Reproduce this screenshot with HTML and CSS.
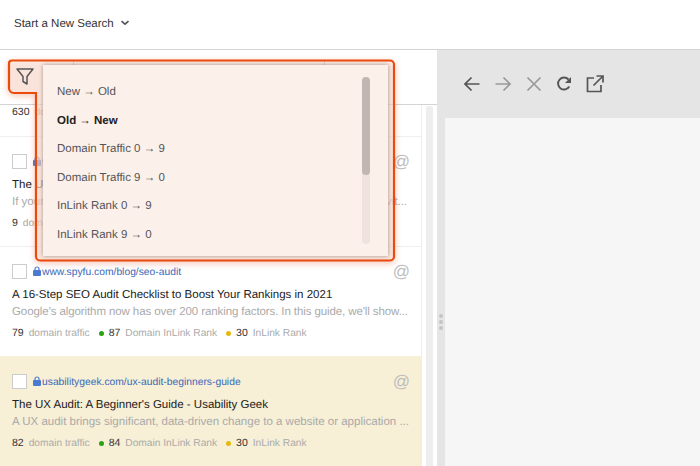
FILE: index.html
```html
<!DOCTYPE html>
<html lang="en">
<head>
<meta charset="utf-8">
<title>Search</title>
<link rel="stylesheet" href="styles.css">
</head>
<body>
<header class="topbar">
  <span class="topbar-title">Start a New Search</span>
  <svg class="chevron" width="10" height="6" viewBox="0 0 10 6"><path d="M1.500 1.200 5 4.200l3.500-3" fill="none" stroke="#555" stroke-width="1.700"/></svg>
</header>
<main class="panes">
  <section class="left">
    <div class="toolbar">
      <button class="filter-btn" type="button">
        <svg width="20" height="20" viewBox="0 0 20 20"><path d="M2 3h16l-6 7.500V18l-4-2.500v-5z" fill="none" stroke="#555" stroke-width="1.500" stroke-linejoin="round"/></svg>
      </button>
      <div class="select-box"></div>
    </div>
    <div class="list-wrap">
      <div class="list">
        <article class="item item-short">
          <div class="meta"><b>630</b><span>domain traffic</span></div>
        </article>
        <article class="item">
          <div class="row-url"><span class="check"></span><svg class="lock" width="8" height="10" viewBox="0 0 8 10"><path d="M2 4.500V3a2 2 0 0 1 4 0v1.500" fill="none" stroke="#4a7bd0" stroke-width="1.200"/><rect y="4" width="8" height="6" rx="1" fill="#4a7bd0"/></svg><a class="url">www.example.com/seo-audit</a><span class="at">@</span></div>
          <h3 class="title">The Ultimate SEO Audit Guide</h3>
          <p class="desc">If your website is not ranking, an audit will show you what to improve and vit...</p>
          <div class="meta"><b>9</b><span>domain traffic</span></div>
        </article>
        <article class="item">
          <div class="row-url"><span class="check"></span><svg class="lock" width="8" height="10" viewBox="0 0 8 10"><path d="M2 4.500V3a2 2 0 0 1 4 0v1.500" fill="none" stroke="#4a7bd0" stroke-width="1.200"/><rect y="4" width="8" height="6" rx="1" fill="#4a7bd0"/></svg><a class="url">www.spyfu.com/blog/seo-audit</a><span class="at">@</span></div>
          <h3 class="title">A 16-Step SEO Audit Checklist to Boost Your Rankings in 2021</h3>
          <p class="desc desc-tight">Google’s algorithm now has over 200 ranking factors. In this guide, we'll show...</p>
          <div class="meta"><b>79</b><span>domain traffic</span><i class="dot dot-green"></i><b>87</b><span>Domain InLink Rank</span><i class="dot dot-yellow"></i><b>30</b><span>InLink Rank</span></div>
        </article>
        <article class="item item-active">
          <div class="row-url"><span class="check"></span><svg class="lock" width="8" height="10" viewBox="0 0 8 10"><path d="M2 4.500V3a2 2 0 0 1 4 0v1.500" fill="none" stroke="#4a7bd0" stroke-width="1.200"/><rect y="4" width="8" height="6" rx="1" fill="#4a7bd0"/></svg><a class="url">usabilitygeek.com/ux-audit-beginners-guide</a><span class="at">@</span></div>
          <h3 class="title">The UX Audit: A Beginner's Guide - Usability Geek</h3>
          <p class="desc">A UX audit brings significant, data-driven change to a website or application ...</p>
          <div class="meta"><b>82</b><span>domain traffic</span><i class="dot dot-green"></i><b>84</b><span>Domain InLink Rank</span><i class="dot dot-yellow"></i><b>30</b><span>InLink Rank</span></div>
        </article>
      </div>
      <div class="list-scroll"></div>
    </div>
  </section>
  <section class="right">
    <div class="splitter"><i></i><i></i><i></i></div>
    <div class="viewer">
      <nav class="browser-bar">
        <svg width="16" height="16" viewBox="1 0 16 16"><path d="M16.500 8H2M8.500 1.500 2 8l6.500 6.500" fill="none" stroke="#555" stroke-width="1.700"/></svg>
        <svg width="18" height="16" viewBox="0 0 18 16"><path d="M1.500 8H16M9.500 1.500 16 8l-6.500 6.500" fill="none" stroke="#999" stroke-width="1.700"/></svg>
        <svg width="16" height="16" viewBox="0 0 16 16"><path d="M1.500 1.500l13 13M14.500 1.500l-13 13" fill="none" stroke="#999" stroke-width="1.700"/></svg>
        <svg width="16" height="16" viewBox="0 0 16 16"><path d="M13.300 10.500A6 6 0 1 1 12.500 3.500" fill="none" stroke="#555" stroke-width="1.900"/><path d="M15 1v6H9z" fill="#555"/></svg>
        <svg width="18" height="18" viewBox="0 0 18 18"><path d="M8 3H1.500v13.500H15V10M7.500 10.500 16.500 1.500M10.500 1h6.500v6.500" fill="none" stroke="#555" stroke-width="1.700"/></svg>
      </nav>
      <div class="viewer-page"></div>
    </div>
  </section>
</main>
<svg class="spot" width="400" height="210" viewBox="0 0 400 210"><path d="M12 1.500H390a4 4 0 0 1 4 4V197.500a4 4 0 0 1-4 4H40a4 4 0 0 1-4-4V34H14a5 5 0 0 1-5-5V4.500a3 3 0 0 1 3-3z" fill="#fbeee8" fill-opacity=".55" stroke="#ea4a0c" stroke-width="2.200"/></svg>
<div class="menu">
  <ul class="menu-list">
    <li>New → Old</li>
    <li class="menu-on">Old → New</li>
    <li>Domain Traffic 0 → 9</li>
    <li>Domain Traffic 9 → 0</li>
    <li>InLink Rank 0 → 9</li>
    <li>InLink Rank 9 → 0</li>
  </ul>
  <div class="menu-track"><div class="menu-thumb"></div></div>
</div>
</body>
</html>
```

FILE: styles.css
```css
* { box-sizing: border-box; }
html, body { margin: 0; height: 100%; overflow: hidden; }
body { width: 700px; height: 466px; background: #fff; font-family: "Liberation Sans", Arial, sans-serif; font-size: 11.500px; color: #333; position: relative; text-rendering: geometricPrecision; }

.topbar { height: 50px; border-bottom: 1px solid #d4d4d4; display: flex; align-items: center; padding: 0 14px 1px; gap: 6px; }
.topbar-title { font-size: 11.500px; color: #333; }
.chevron { margin-top: -3px; }

.panes { display: flex; height: 416px; }
.left { width: 437px; flex: none; display: flex; flex-direction: column; }
.toolbar { height: 55px; border-bottom: 1px solid #d4d4d4; flex: none; display: flex; padding: 10px 0 0 9px; gap: 33px; }
.filter-btn { position: relative; z-index: 2; width: 31px; height: 32px; padding: 0; border: 0; background: none; display: flex; align-items: center; justify-content: center; }
.select-box { width: 252px; height: 32px; border: 1px solid #bbb; border-radius: 2px; }

.list-wrap { flex: 1; display: flex; min-height: 0; }
.list { width: 422px; flex: none; border-right: 1px solid #eee; overflow: hidden; }
.list-scroll { width: 7px; margin: 1px 4px 0; background: #eeeeee; border-radius: 3px 3px 0 0; }

.item { height: 110px; padding: 17px 13px 0 12px; border-bottom: 1px solid #efefef; }
.item-short { height: 32px; padding-top: 0; }
.item-active { background: #f7efd6; margin-top: -1px; padding-top: 18px; border-bottom: 0; }
.row-url { display: flex; align-items: center; height: 15px; }
.check { width: 15px; height: 15px; background: #fff; border: 1px solid #ccc; flex: none; margin-right: 6px; }
.lock { flex: none; margin-right: 1px; margin-top: -2px; }
.url { font-size: 10.300px; color: #3a68b8; margin-top: 2px; }
.at { margin-left: auto; margin-right: -2px; font-size: 17px; line-height: 15px; color: #bdbdbd; }
.title { margin: 8px 0 0; font-size: 11.500px; line-height: 16px; font-weight: 400; color: #222; white-space: nowrap; }
.desc { margin: 1px 0 0; font-size: 11.500px; line-height: 16px; color: #aaa; white-space: nowrap; }
.desc-tight { letter-spacing: -.1px; }
.meta { margin-top: 6px; display: flex; align-items: center; height: 14px; font-size: 10.200px; color: #aaa; white-space: nowrap; }
.item-short .meta { margin-top: 0; }
.meta b { font-size: 10.500px; font-weight: 400; color: #333; margin-right: 5px; }
.dot { width: 5px; height: 5px; border-radius: 50%; margin: 0 5px 0 9px; flex: none; }
.dot-green { background: #2aa312; }
.dot-yellow { background: #e3bb10; }

.right { flex: 1; display: flex; background: #e5e5e5; min-width: 0; }
.splitter { width: 8px; flex: none; display: flex; flex-direction: column; justify-content: center; align-items: center; gap: 2px; height: 416px; padding-top: 128px; margin-top: 0; padding-right: 1px; }
.splitter i { width: 4px; height: 4px; border-radius: 50%; background: #c4c4c4; }
.viewer { flex: 1; display: flex; flex-direction: column; min-width: 0; }
.browser-bar { height: 68px; flex: none; display: flex; align-items: center; gap: 14px; padding: 0 0 0 19px; }
.viewer-page { flex: 1; background: #f6f6f6; }

.spot { position: absolute; left: 0; top: 59px; filter: drop-shadow(0 2px 3px rgba(225, 70, 20, .4)); }
.menu { position: absolute; left: 43px; top: 65px; width: 345px; height: 191px; background: #fcf0eb; box-shadow: 0 0 4px rgba(0, 0, 0, .35); display: flex; }
.menu-list { list-style: none; margin: 0; padding: 13px 0 0 14px; flex: 1; font-size: 11.500px; color: #555; }
.menu-list li { height: 28.600px; line-height: 28.600px; }
.menu-on { font-weight: 700; color: #222; }
.menu-track { position: absolute; left: 319px; top: 12px; width: 8px; height: 167px; background: #efe2df; border-radius: 4px; }
.menu-thumb { height: 98px; background: #c2b6b2; border-radius: 4px; }
```
